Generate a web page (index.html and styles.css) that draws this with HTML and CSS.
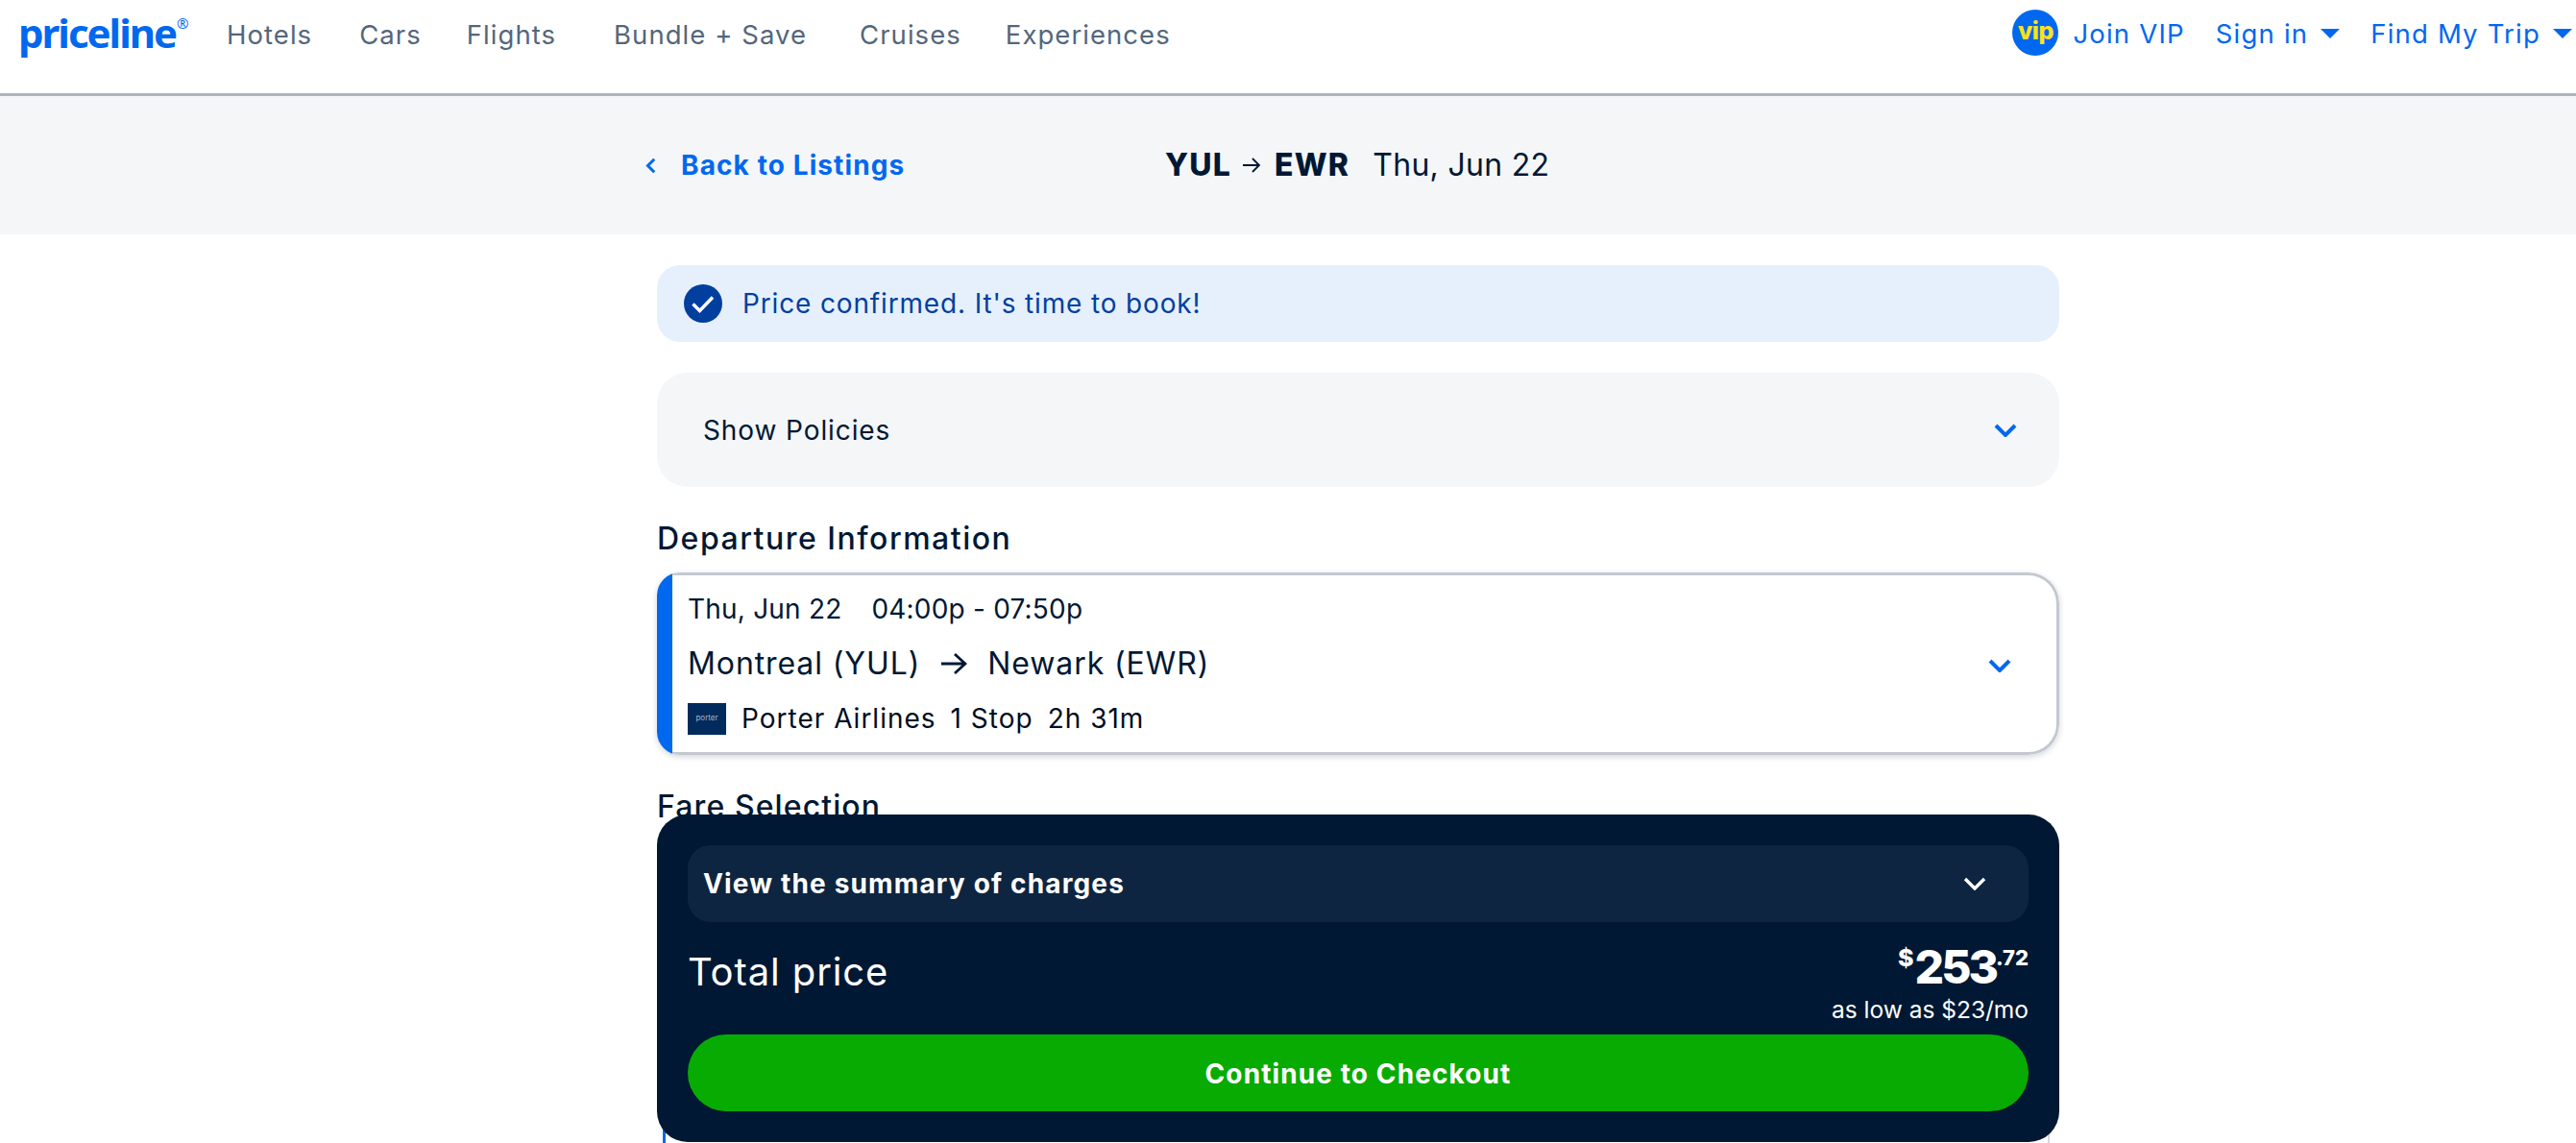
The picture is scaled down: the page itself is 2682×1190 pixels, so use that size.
FILE: index.html
```html
<!DOCTYPE html>
<html lang="en">
<head>
<meta charset="utf-8">
<title>Priceline - Flight details</title>
<link rel="stylesheet" href="styles.css">
</head>
<body>
<div class="page">
  <header class="topbar">
    <div class="logo">priceline<span class="reg">®</span></div>
    <nav class="nav">
      <a class="nav-link nl-hotels">Hotels</a>
      <a class="nav-link nl-cars">Cars</a>
      <a class="nav-link nl-flights">Flights</a>
      <a class="nav-link nl-bundle">Bundle + Save</a>
      <a class="nav-link nl-cruises">Cruises</a>
      <a class="nav-link nl-exp">Experiences</a>
    </nav>
    <div class="account">
      <span class="vip-badge">vip</span>
      <a class="acc-link acc-join">Join VIP</a>
      <a class="acc-link acc-sign">Sign in <svg class="caret" viewBox="0 0 20 10"><path d="M0 0h20L10 10z"/></svg></a>
      <a class="acc-link acc-trip">Find My Trip <svg class="caret" viewBox="0 0 20 10"><path d="M0 0h20L10 10z"/></svg></a>
    </div>
  </header>

  <div class="band">
    <a class="back">
      <svg class="back-icon" viewBox="0 0 10 14"><path d="M7.500 2.500 3 7l4.500 4.500" fill="none" stroke="#0068ef" stroke-width="2"/></svg>
      <span>Back to Listings</span>
    </a>
    <div class="route">
      <b>YUL</b>
      <svg class="route-arrow" viewBox="0 0 20 20"><path d="M1 10h17M11 3l7 7-7 7" fill="none" stroke="#001833" stroke-width="1.800"/></svg>
      <b>EWR</b>
      <span class="route-date">Thu, Jun 22</span>
    </div>
  </div>

  <main class="content">
    <div class="alert">
      <svg class="check" viewBox="0 0 40 40"><circle cx="20" cy="20" r="20" fill="#003f9e"/><path d="M9.500 20.500 16.500 27.500 30 13.500" fill="none" stroke="#fff" stroke-width="3.400"/></svg>
      <span>Price confirmed. It's time to book!</span>
    </div>

    <div class="policies">
      <span>Show Policies</span>
      <svg class="chev" viewBox="0 0 24 14"><path d="M2 2l10 10L22 2" fill="none" stroke="#0068ef" stroke-width="4"/></svg>
    </div>

    <h2 class="section-title">Departure Information</h2>
    <section class="flight-card">
      <div class="flight-bar"></div>
      <div class="flight-body">
        <div class="flight-info">
          <div class="when"><span>Thu, Jun 22</span><span>04:00p - 07:50p</span></div>
          <div class="cities">
            <span>Montreal (YUL)</span>
            <svg class="city-arrow" viewBox="0 0 28 24"><path d="M1 12h25M15 2l11 10-11 10" fill="none" stroke="#001833" stroke-width="2.800"/></svg>
            <span>Newark (EWR)</span>
          </div>
          <div class="carrier">
            <span class="carrier-logo">porter</span>
            <span>Porter Airlines</span><span>1 Stop</span><span>2h 31m</span>
          </div>
        </div>
        <svg class="chev chev-card" viewBox="0 0 24 14"><path d="M2 2l10 10L22 2" fill="none" stroke="#0068ef" stroke-width="4"/></svg>
      </div>
    </section>

    <h2 class="section-title fare-title">Fare Selection</h2>
    <div class="fare-card"></div>
  </main>

  <aside class="checkout">
    <div class="summary">
      <span>View the summary of charges</span>
      <svg class="chev" viewBox="0 0 24 14"><path d="M2 2l10 10L22 2" fill="none" stroke="#fff" stroke-width="3.400"/></svg>
    </div>
    <div class="total">
      <span class="total-label">Total price</span>
      <div class="total-amount">
        <div class="price"><span class="price-dollar">$</span><span class="price-lg">253</span><span class="price-sm">.72</span></div>
        <div class="monthly">as low as $23/mo</div>
      </div>
    </div>
    <button class="cta">Continue to Checkout</button>
  </aside>
</div>
</body>
</html>
```
FILE: styles.css
```css
* { box-sizing: border-box; }
html, body { margin: 0; padding: 0; background: #fff; }
body { font-family: Inter, "Liberation Sans", sans-serif; color: #001833; }
.page { position: relative; width: 100%; height: 1190px; overflow: hidden; }

.topbar { display: flex; align-items: center; height: 100px; padding: 11px 4px 41px 19px; border-bottom: 3px solid #aeb4bd; }
.logo { width: 217px; margin-bottom: 10px; font-family: "Noto Sans", sans-serif; font-weight: 700; font-size: 42px; line-height: 48px; letter-spacing: -2px; color: #0068ef; white-space: nowrap; }
.reg { font-size: 15px; font-weight: 400; vertical-align: 20px; letter-spacing: 0; margin-left: 1px; }
.nav { display: flex; margin-top: 5px; }
.nav-link { font-size: 27.500px; line-height: 48px; letter-spacing: 1.050px; color: #54667c; white-space: nowrap; }
.nl-cars { margin-left: 49px; }
.nl-flights { margin-left: 47px; }
.nl-bundle { margin-left: 60px; }
.nl-cruises { margin-left: 55px; }
.nl-exp { margin-left: 46px; }
.account { display: flex; align-items: center; margin-left: auto; }
.vip-badge { width: 48px; height: 48px; border-radius: 50%; background: #0068ef; color: #ffe01b; font-weight: 800; font-size: 25px; line-height: 44px; text-align: center; letter-spacing: -.5px; }
.acc-link { display: flex; align-items: center; gap: 13px; padding-top: 3px; font-size: 27.500px; line-height: 48px; letter-spacing: 1.200px; color: #0068ef; white-space: nowrap; }
.acc-join { margin-left: 15px; }
.acc-sign { margin-left: 32px; }
.acc-trip { margin-left: 32px; }
.caret { width: 20px; height: 10px; fill: #0068ef; }

.band { display: flex; align-items: flex-start; height: 144px; padding: 48px 0 0 670px; background: #f4f6f8; }
.back { display: flex; align-items: center; width: 543px; gap: 24px; font-size: 28px; font-weight: 700; line-height: 48px; letter-spacing: 1.100px; color: #0068ef; }
.back-icon { width: 15px; height: 21px; }
.route { display: flex; align-items: center; font-size: 32px; line-height: 48px; color: #001833; }
.route b { font-weight: 800; letter-spacing: 1.200px; }
.route-arrow { width: 20px; height: 20px; margin: 0 14px 0 11px; }
.route-date { margin-left: 24px; letter-spacing: .300px; }

.content { display: flex; flex-direction: column; width: 1460px; margin-left: 684px; padding-top: 32px; }
.alert { display: flex; align-items: center; gap: 21px; height: 80px; padding-left: 28px; border-radius: 24px; background: #e6f0fd; font-size: 28px; letter-spacing: .850px; color: #003f9e; }
.check { width: 40px; height: 40px; }
.policies { display: flex; align-items: center; justify-content: space-between; height: 119px; margin-top: 32px; padding: 0 44px 0 48px; border-radius: 32px; background: #f4f6f8; font-size: 28px; letter-spacing: .900px; }
.chev { width: 24px; height: 14px; }
.chev-card { margin-top: 4px; }
.section-title { margin: 0; font-size: 32px; font-weight: 500; line-height: 40px; letter-spacing: 1.500px; }
.content > .section-title { margin-top: 34px; }
.flight-card { display: flex; height: 190px; margin-top: 15px; border-radius: 24px 32px 32px 24px; overflow: hidden; background: #fff; box-shadow: 0 2px 6px rgba(0, 24, 51, .18); }
.flight-bar { flex: 0 0 16px; background: #0068ef; }
.flight-body { display: flex; flex: 1; align-items: center; justify-content: space-between; padding: 0 47px 0 16px; border: 3px solid #c3c8d0; border-left: 0; border-radius: 0 32px 32px 0; }
.flight-info { display: flex; flex-direction: column; padding-bottom: 3px; }
.when { display: flex; gap: 31px; font-size: 28px; line-height: 40px; letter-spacing: .200px; }
.cities { display: flex; align-items: center; margin-top: 17px; font-size: 32px; line-height: 40px; letter-spacing: .900px; }
.city-arrow { width: 28px; height: 24px; margin: 0 21px; }
.carrier { display: flex; align-items: center; margin-top: 20px; font-size: 28px; line-height: 34px; letter-spacing: 1px; color: #000d1f; }
.carrier span + span { margin-left: 15px; }
.carrier .carrier-logo + span { margin-left: 16px; }
.carrier-logo { width: 40px; height: 33px; background: #002b5c; color: #aab6c6; font-size: 8px; line-height: 30px; letter-spacing: 0; text-align: center; }
.fare-title { letter-spacing: 1.100px; }
.fare-card { height: 400px; margin: 16px 10px 0 6px; border: 2px solid #d5d9de; border-left: 3px solid #0068ef; }

.checkout { position: absolute; left: 684px; bottom: 1px; display: flex; flex-direction: column; width: 1460px; height: 341px; padding: 32px; border-radius: 32px; background: #001833; color: #fff; }
.summary { display: flex; align-items: center; justify-content: space-between; height: 80px; padding: 0 44px 0 16px; border-radius: 24px; background: #0d2540; font-size: 28px; font-weight: 700; letter-spacing: 1.150px; }
.total { display: flex; justify-content: space-between; height: 118px; }
.total-label { margin-top: 28px; font-size: 40px; line-height: 48px; letter-spacing: .900px; }
.total-amount { display: flex; flex-direction: column; align-items: flex-end; margin-top: 22px; }
.price { display: flex; align-items: flex-start; font-weight: 800; line-height: 1; }
.price-dollar { margin-right: 1px; font-size: 25px; line-height: 30px; }
.price-sm { font-size: 22px; line-height: 30px; }
.price-lg { font-size: 48px; line-height: 50px; letter-spacing: -3px; }
.monthly { margin-top: 4px; font-size: 24.500px; line-height: 30px; }
.cta { height: 80px; padding-top: 2px; border: 0; border-radius: 40px; background: #08ab02; color: #fff; font: 700 28px Inter, "Liberation Sans", sans-serif; letter-spacing: 1.100px; }
```
